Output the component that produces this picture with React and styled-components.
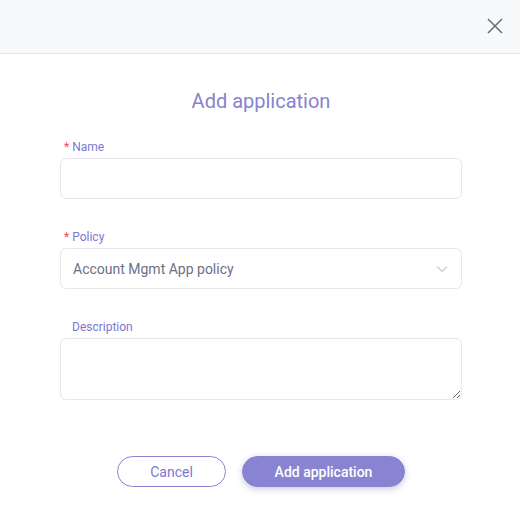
import React from 'react';
import styled, { createGlobalStyle } from 'styled-components';

const GlobalStyle = createGlobalStyle`
  body {
    margin: 0;
    background: #ffffff;
    font-family: Roboto, "Liberation Sans", sans-serif;
  }
`;

const Modal = styled.div`
  width: 520px;
  height: 514px;
  background: #fff;
  display: flex;
  flex-direction: column;
`;

const Header = styled.div`
  height: 54px;
  background: #f8f9fb;
  border-bottom: 1px solid #e5e6ec;
  display: flex;
  justify-content: flex-end;
  align-items: center;
  padding-right: 17px;
  box-sizing: border-box;
`;

const CloseButton = styled.button`
  border: none;
  background: none;
  padding: 0;
  width: 16px;
  height: 16px;
  display: flex;
  cursor: pointer;
  margin-top: -1px;
`;

const Body = styled.div`
  padding: 36px 58px 0 60px;
  display: flex;
  flex-direction: column;
`;

const Title = styled.h2`
  margin: 0 0 28px;
  text-align: center;
  font-size: 20px;
  line-height: 22px;
  font-weight: 400;
  color: #8782d0;
`;

const Field = styled.div`
  display: flex;
  flex-direction: column;
  margin-bottom: ${({ $gap }) => $gap}px;
`;

const Label = styled.label`
  font-size: 12px;
  line-height: 14px;
  color: #7c78cf;
  padding-left: ${({ $required }) => ($required ? 4 : 12)}px;
  margin-bottom: 4px;
`;

const Star = styled.span`
  color: #f5475e;
  margin-right: 3px;
`;

const Input = styled.input`
  height: 41px;
  box-sizing: border-box;
  border: 1px solid #e7e7ed;
  border-radius: 6px;
  outline: none;
  padding: 0 12px;
  font-family: inherit;
  font-size: 14px;
`;

const SelectBox = styled.div`
  height: 41px;
  box-sizing: border-box;
  border: 1px solid #e7e7ed;
  border-radius: 6px;
  padding: 0 13px 0 12px;
  display: flex;
  align-items: center;
  justify-content: space-between;
  font-size: 14px;
  color: #6c6f86;
`;

const TextArea = styled.textarea`
  height: 62px;
  box-sizing: border-box;
  border: 1px solid #e7e7ed;
  border-radius: 6px;
  outline: none;
  padding: 8px 12px;
  font-family: inherit;
  font-size: 14px;
  resize: vertical;
  display: block;
`;

const Actions = styled.div`
  display: flex;
  justify-content: center;
  gap: 16px;
  margin-top: 56px;
`;

const Button = styled.button`
  height: 31px;
  width: ${({ $w }) => $w}px;
  border-radius: 16px;
  font-family: inherit;
  font-size: 14px;
  cursor: pointer;
  border: 1px solid #8884d1;
  background: ${({ $primary }) => ($primary ? '#8884d1' : '#fff')};
  color: ${({ $primary }) => ($primary ? '#fff' : '#7c78cf')};
  font-weight: ${({ $primary }) => ($primary ? 500 : 400)};
  box-shadow: ${({ $primary }) => ($primary ? '0 2px 6px rgba(80, 76, 160, 0.3)' : 'none')};
`;

export default function App() {
  return (
    <>
      <GlobalStyle />
      <Modal>
        <Header>
          <CloseButton aria-label="Close">
            <svg width="16" height="16" viewBox="0 0 16 16">
              <path d="M1 1L15 15M15 1L1 15" stroke="#6e6f78" strokeWidth="1.6" />
            </svg>
          </CloseButton>
        </Header>
        <Body>
          <Title>Add application</Title>
          <Field $gap={31}>
            <Label $required><Star>*</Star>Name</Label>
            <Input />
          </Field>
          <Field $gap={31}>
            <Label $required><Star>*</Star>Policy</Label>
            <SelectBox>
              <span>Account Mgmt App policy</span>
              <svg width="12" height="8" viewBox="0 0 12 8">
                <path d="M1 1.5L6 6.5L11 1.5" stroke="#c9cad3" strokeWidth="1.2" fill="none" />
              </svg>
            </SelectBox>
          </Field>
          <Field $gap={0}>
            <Label>Description</Label>
            <TextArea />
          </Field>
          <Actions>
            <Button $w={109}>Cancel</Button>
            <Button $w={163} $primary>Add application</Button>
          </Actions>
        </Body>
      </Modal>
    </>
  );
}
